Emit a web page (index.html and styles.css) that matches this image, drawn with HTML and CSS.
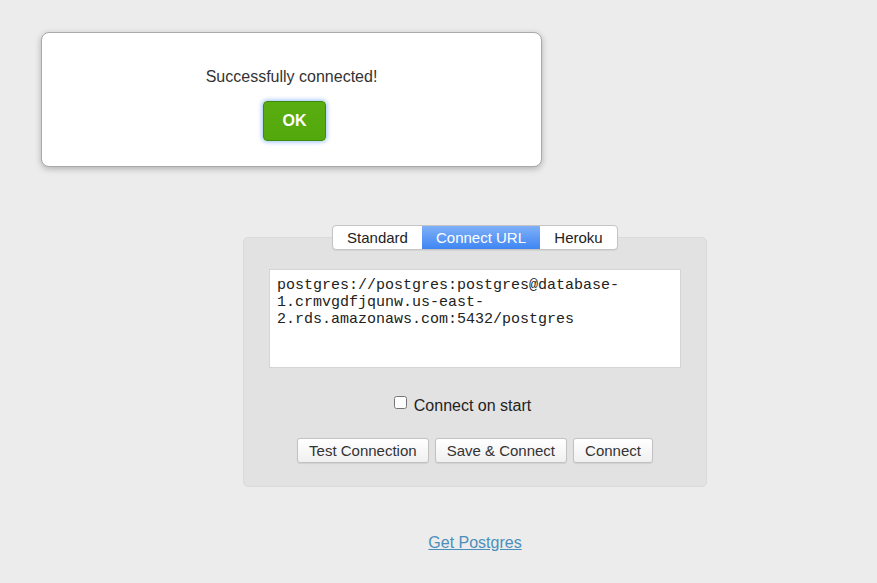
FILE: index.html
```html
<!DOCTYPE html>
<html>
<head>
<meta charset="utf-8">
<link rel="stylesheet" href="styles.css">
</head>
<body>
<div class="main">
  <div class="tabs">
    <div class="tab">Standard</div>
    <div class="tab active">Connect URL</div>
    <div class="tab">Heroku</div>
  </div>
  <div class="panel">
    <textarea class="url" spellcheck="false">postgres://postgres:postgres@database-1.crmvgdfjqunw.us-east-2.rds.amazonaws.com:5432/postgres</textarea>
    <label class="start"><input type="checkbox" class="check"><span>Connect on start</span></label>
    <div class="actions">
      <button class="btn">Test Connection</button>
      <button class="btn">Save &amp; Connect</button>
      <button class="btn">Connect</button>
    </div>
  </div>
  <div class="footer"><a href="#" class="link">Get Postgres</a></div>
</div>
<div class="modal">
  <div class="modal-text">Successfully connected!</div>
  <button class="ok">OK</button>
</div>
</body>
</html>
```
FILE: styles.css
```css
html, body {
  margin: 0;
  padding: 0;
}
body {
  background: #ececec;
  font-family: "Liberation Sans", Arial, sans-serif;
  color: #333;
  width: 877px;
  height: 583px;
  overflow: hidden;
  position: relative;
}
.main {
  padding: 225px 0 0 73px;
  display: flex;
  flex-direction: column;
  align-items: center;
}
.tabs {
  display: flex;
  height: 25px;
  box-sizing: border-box;
  border: 1px solid #c4c4c4;
  border-radius: 4px;
  background: #fff;
  overflow: hidden;
  position: relative;
  z-index: 1;
  margin-bottom: -13px;
  box-shadow: 0 1px 1px rgba(0,0,0,0.06);
}
.tab {
  font-size: 15px;
  line-height: 23px;
  color: #222;
  text-align: center;
}
.tab:nth-child(1) { width: 89px; }
.tab:nth-child(2) { width: 118px; }
.tab:nth-child(3) { width: 77px; }
.tab.active {
  background: linear-gradient(#7fb0f7, #3f86f3);
  color: #fff;
}
.panel {
  width: 464px;
  box-sizing: border-box;
  background: #e2e2e2;
  border: 1px solid #dadada;
  border-radius: 5px;
  padding: 31px 25px 23px;
  display: flex;
  flex-direction: column;
  align-items: center;
}
.url {
  width: 412px;
  height: 99px;
  box-sizing: border-box;
  border: 1px solid #d4d4d4;
  background: #fff;
  padding: 7px 7px;
  margin: 0;
  font-family: "Liberation Mono", "DejaVu Sans Mono", monospace;
  font-size: 15px;
  line-height: 17px;
  color: #222;
  resize: none;
  outline: none;
  display: block;
}
.start {
  display: flex;
  align-items: center;
  margin-top: 29px;
  font-size: 16px;
  color: #222;
  height: 18px;
  padding-right: 25px;
}
.check {
  width: 13px;
  height: 13px;
  margin: 0 7px 0 0;
  position: relative;
  top: -4px;
}
.actions {
  display: flex;
  gap: 6px;
  margin-top: 23px;
}
.btn {
  height: 25px;
  box-sizing: border-box;
  border: 1px solid #c2c2c2;
  border-radius: 3px;
  background: linear-gradient(#ffffff, #f0f0f0);
  font-family: "Liberation Sans", Arial, sans-serif;
  font-size: 15px;
  color: #333;
  padding: 0 11px;
  margin: 0;
  box-shadow: 0 1px 1px rgba(0,0,0,0.08);
}
.footer {
  margin-top: 47px;
  font-size: 16px;
}
.link {
  color: #4a8fbb;
  text-decoration: underline;
}
.modal {
  position: absolute;
  left: 41px;
  top: 32px;
  width: 501px;
  height: 135px;
  box-sizing: border-box;
  background: #fff;
  border: 1px solid #a9a9a9;
  border-radius: 8px;
  box-shadow: 0 2px 6px rgba(0,0,0,0.25);
  display: flex;
  flex-direction: column;
  align-items: center;
  padding-top: 35px;
}
.modal-text {
  font-size: 16px;
  line-height: 18px;
  color: #333;
}
.ok {
  margin-top: 15px;
  margin-left: 6px;
  width: 63px;
  height: 40px;
  box-sizing: border-box;
  border: 1px solid #3f8a0a;
  border-radius: 4px;
  background: linear-gradient(#5aad10, #52a80c);
  color: #fff;
  font-family: "Liberation Sans", Arial, sans-serif;
  font-weight: bold;
  font-size: 16px;
  box-shadow: 0 0 4px 1px rgba(90,150,255,0.6);
  padding: 0;
}
```
